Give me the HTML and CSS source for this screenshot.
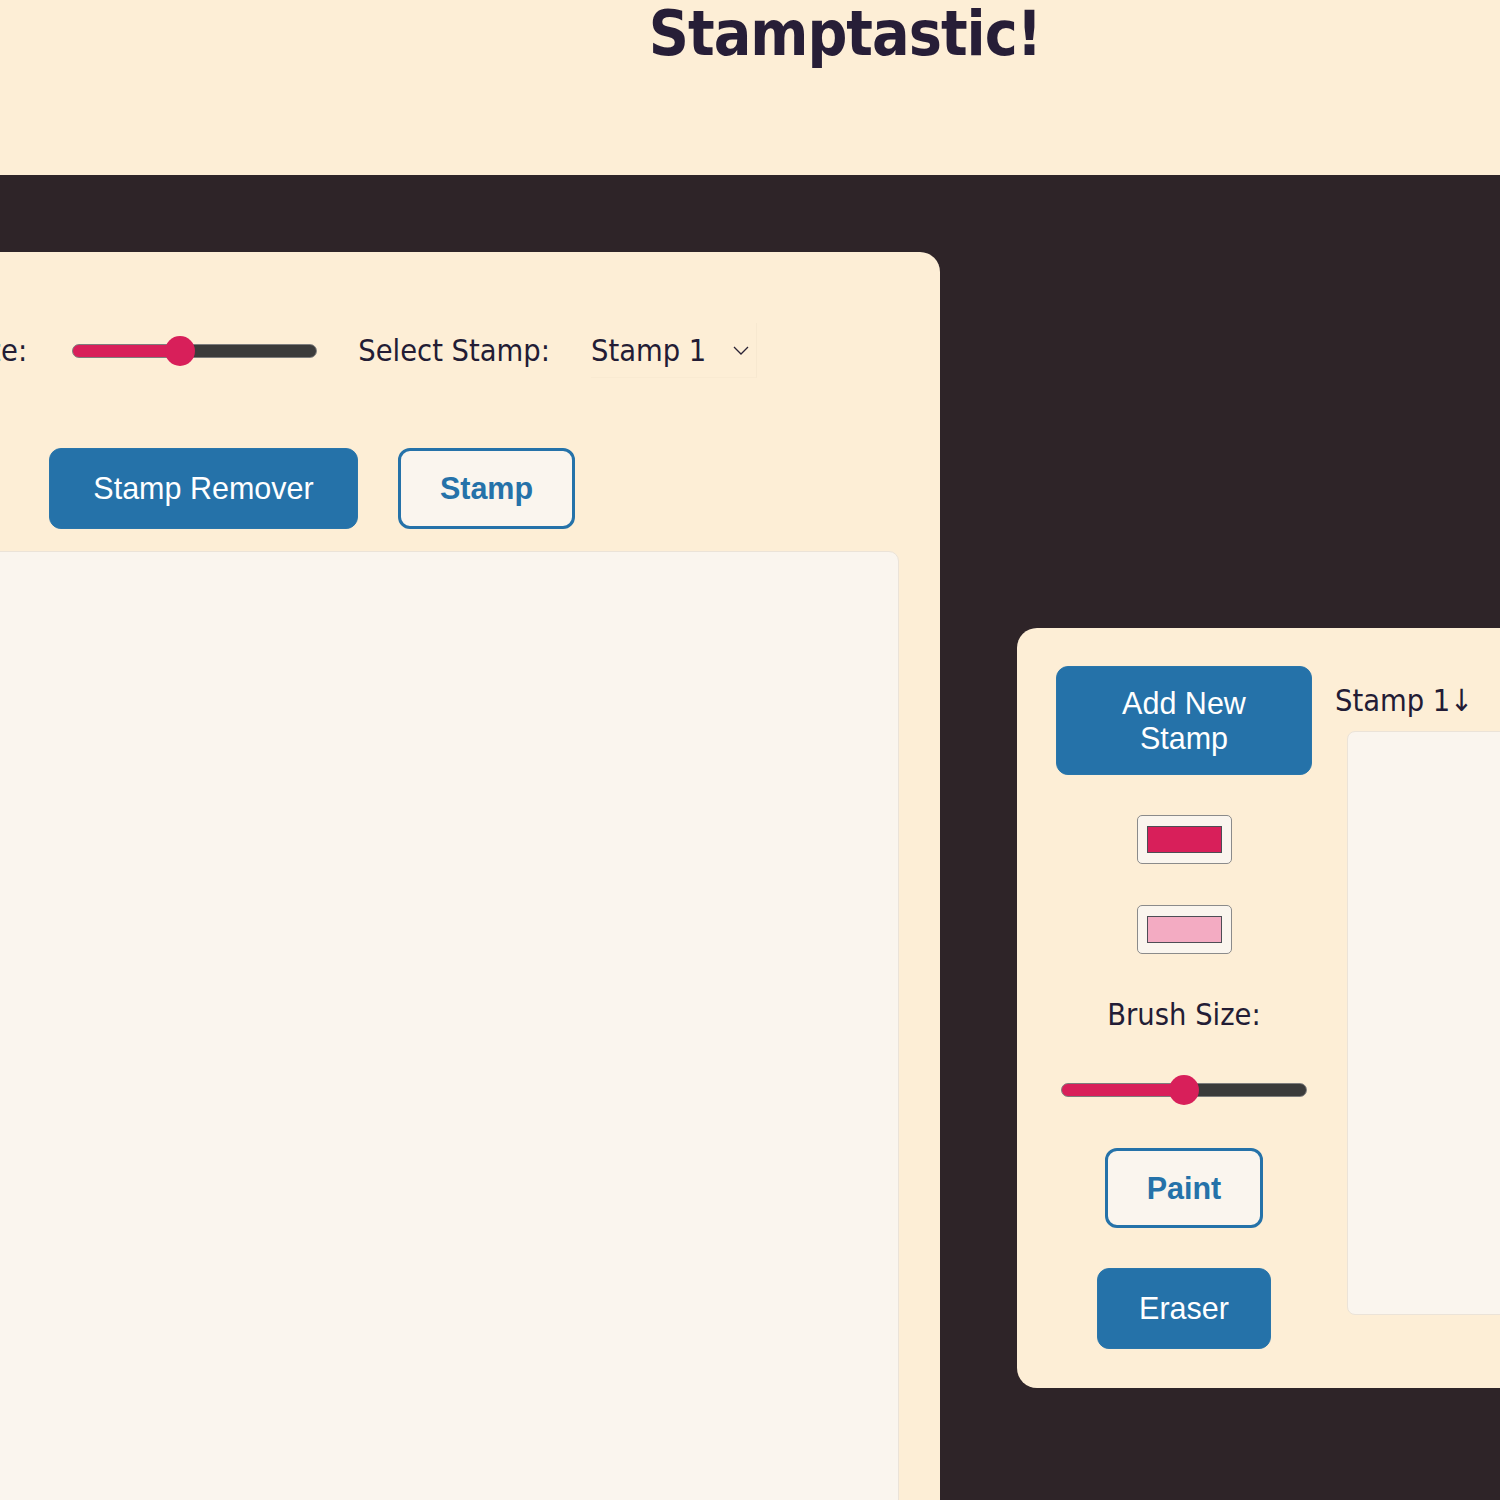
FILE: index.html
```html
<!DOCTYPE html>
<html lang="en">
<head>
<meta charset="utf-8">
<title>Stamptastic!</title>
<link rel="stylesheet" href="styles.css">
</head>
<body>
<header class="site-header">
  <h1 class="title">Stamptastic!</h1>
</header>
<main class="workspace">
  <section class="editor-panel">
    <div class="controls-row">
      <label class="control-label">Brush Size:</label>
      <input type="range" class="slider slider-editor" min="0" max="100" value="43" style="--p:44%">
      <label class="control-label">Select Stamp:</label>
      <div class="select-wrap">
        <select class="stamp-select"><option>Stamp 1</option></select>
        <svg class="chevron" viewBox="0 0 16 9" width="16" height="9"><path d="M1 1 L8 8 L15 1" fill="none" stroke="#2a2235" stroke-width="1.3"/></svg>
      </div>
    </div>
    <div class="buttons-row">
      <button class="btn btn-solid btn-remover">Stamp Remover</button>
      <button class="btn btn-outline btn-stamp">Stamp</button>
    </div>
    <div class="canvas-area"></div>
  </section>
  <aside class="stamp-panel">
    <div class="tool-column">
      <button class="btn btn-solid btn-add">Add New Stamp</button>
      <input type="color" class="color-input color-first" value="#d81f5a">
      <input type="color" class="color-input color-second" value="#f3abc2">
      <label class="control-label brush-label">Brush Size:</label>
      <input type="range" class="slider slider-tool" min="0" max="100" value="50" style="--p:50%">
      <button class="btn btn-outline btn-paint">Paint</button>
      <button class="btn btn-solid btn-eraser">Eraser</button>
    </div>
    <div class="stamp-list">
      <div class="stamp-heading">Stamp 1↓</div>
      <div class="stamp-canvas"></div>
    </div>
  </aside>
</main>
</body>
</html>
```

FILE: styles.css
```css
html, body {
  margin: 0;
  padding: 0;
  overflow: hidden;
  background: #2e2428;
}
body {
  width: 1500px;
  height: 1500px;
  font-family: "DejaVu Sans", sans-serif;
  font-stretch: condensed;
  color: #231c35;
}
.site-header {
  height: 175px;
  background: #fdeed6;
  padding-left: 190px;
  box-sizing: border-box;
}
.title {
  margin: 0;
  padding-top: 3px;
  text-align: center;
  font-size: 62px;
  line-height: 62px;
  font-weight: bold;
  font-stretch: condensed;
  letter-spacing: -1px;
  color: #271e37;
}
.workspace {
  display: flex;
  justify-content: center;
  align-items: flex-start;
  gap: 77px;
  padding-top: 77px;
  background: #2e2428;
  height: 1248px;
  box-sizing: border-box;
}
.editor-panel {
  flex: 0 0 1057px;
  width: 1057px;
  background: #fdeed6;
  border-radius: 0 20px 0 0;
  padding: 41px 41px 0;
  box-sizing: border-box;
  height: 1300px;
}
.controls-row {
  display: flex;
  justify-content: flex-end;
  align-items: center;
  height: 55px;
  margin-top: 30px;
  margin-right: 142px;
}
.controls-row > * {
  flex-shrink: 0;
}
.control-label {
  font-size: 30.5px;
  font-stretch: condensed;
  line-height: 40px;
  white-space: nowrap;
}
.slider {
  -webkit-appearance: none;
  appearance: none;
  height: 14px;
  margin: 0;
  padding: 0;
  border: 1px solid #7d7d7d;
  border-radius: 7px;
  box-sizing: border-box;
  background: linear-gradient(to right, #d81f5a var(--p), #3b3b3b var(--p));
  outline: none;
}
.slider::-webkit-slider-thumb {
  -webkit-appearance: none;
  appearance: none;
  width: 30px;
  height: 30px;
  border-radius: 50%;
  background: #d81f5a;
  border: none;
}
.slider-editor {
  width: 245px;
  margin-left: 45px;
  margin-right: 41px;
}
.select-wrap {
  position: relative;
  width: 166px;
  height: 55px;
  margin-left: 41px;
  box-sizing: border-box;
  border-right: 1px solid #f7e8d0;
  border-bottom: 1px solid #f9ead2;
}
.stamp-select {
  -webkit-appearance: none;
  appearance: none;
  width: 100%;
  height: 100%;
  border: none;
  background: transparent;
  font-family: "DejaVu Sans", sans-serif;
  font-stretch: condensed;
  font-size: 30.5px;
  color: #231c35;
  padding: 0;
  margin: 0;
  outline: none;
}
.chevron {
  position: absolute;
  right: 7px;
  top: 23px;
  pointer-events: none;
}
.buttons-row {
  display: flex;
  justify-content: flex-end;
  gap: 40px;
  margin-top: 70px;
  margin-right: 324px;
}
.btn {
  font-family: "Liberation Sans", Arial, sans-serif;
  font-stretch: normal;
  font-size: 30.5px;
  line-height: 35px;
  border-radius: 12px;
  box-sizing: border-box;
  cursor: pointer;
  padding: 0;
  margin: 0;
  flex-shrink: 0;
}
.btn-solid {
  background: #2572a9;
  color: #ffffff;
  border: 1px solid #2a76ab;
}
.btn-outline {
  background: #faf5ee;
  color: #2572a9;
  border: 3px solid #2572a9;
  font-weight: bold;
}
.btn-remover {
  width: 309px;
  height: 81px;
}
.btn-stamp {
  width: 177px;
  height: 81px;
}
.canvas-area {
  margin-top: 22px;
  height: 1000px;
  background: #faf5ee;
  border: 1px solid #ebe3d8;
  border-radius: 0 10px 0 0;
}
.stamp-panel {
  flex: 0 0 600px;
  width: 600px;
  margin-top: 376px;
  background: #fdeed6;
  border-radius: 20px;
  padding: 38px 0 39px 39px;
  box-sizing: border-box;
  display: flex;
  align-items: flex-start;
}
.tool-column {
  width: 256px;
  flex-shrink: 0;
  display: flex;
  flex-direction: column;
  align-items: center;
}
.btn-add {
  width: 256px;
  height: 109px;
  padding: 0 42px;
}
.color-input {
  -webkit-appearance: none;
  appearance: none;
  width: 95px;
  height: 49px;
  padding: 10px 9px;
  box-sizing: border-box;
  border: 1px solid #8b8b8b;
  border-radius: 5px;
  background: #faf5ee;
  margin: 0;
  cursor: pointer;
}
.color-input::-webkit-color-swatch-wrapper {
  padding: 0;
}
.color-input::-webkit-color-swatch {
  border: 1px solid #4d4d55;
  border-radius: 0;
}
.color-first {
  margin-top: 40px;
}
.color-second {
  margin-top: 41px;
}
.brush-label {
  margin-top: 38px;
  line-height: 45px;
}
.slider-tool {
  width: 246px;
  margin-top: 46px;
}
.btn-paint {
  width: 158px;
  height: 80px;
  margin-top: 51px;
}
.btn-eraser {
  width: 174px;
  height: 81px;
  margin-top: 40px;
}
.stamp-list {
  flex: 1;
  margin-left: 23px;
}
.stamp-heading {
  font-size: 30.5px;
  font-stretch: condensed;
  line-height: 40px;
  padding-top: 15px;
  white-space: nowrap;
}
.stamp-canvas {
  margin-top: 10px;
  margin-left: 12px;
  height: 582px;
  background: #faf5ee;
  border: 1px solid #ebe3d8;
  border-radius: 8px 0 0 8px;
}
```
